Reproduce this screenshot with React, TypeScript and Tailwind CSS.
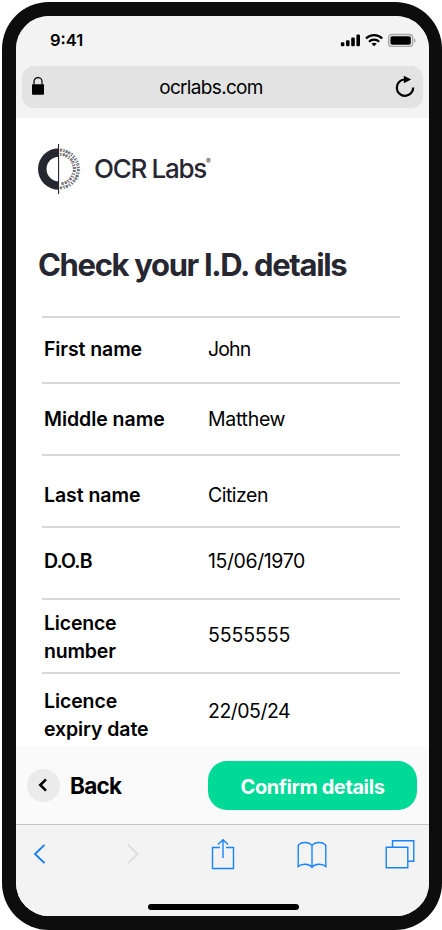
interface Detail {
  label: string;
  value: string;
  row: string;
  labelClass: string;
  valueClass: string;
}

const details: Detail[] = [
  {
    label: 'First name',
    value: 'John',
    row: 'h-[66px]',
    labelClass: 'pt-[17px] tracking-[-0.1px]',
    valueClass: 'pt-[17px] tracking-[-0.9px]',
  },
  {
    label: 'Middle name',
    value: 'Matthew',
    row: 'h-[72px]',
    labelClass: 'pt-[21px] tracking-[-0.05px]',
    valueClass: 'pt-[21px] tracking-[-0.3px]',
  },
  {
    label: 'Last name',
    value: 'Citizen',
    row: 'h-[72px]',
    labelClass: 'pt-[25px] tracking-[-0.05px]',
    valueClass: 'pt-[25px] tracking-[-0.5px]',
  },
  {
    label: 'D.O.B',
    value: '15/06/1970',
    row: 'h-[72px]',
    labelClass: 'pt-[19px] tracking-[-0.8px]',
    valueClass: 'pt-[19px] tracking-[-0.4px]',
  },
  {
    label: 'Licence number',
    value: '5555555',
    row: 'h-[74px]',
    labelClass: 'pt-[9px] tracking-[-0.2px]',
    valueClass: 'pt-[21px] tracking-[-0.1px]',
  },
  {
    label: 'Licence expiry date',
    value: '22/05/24',
    row: 'h-[74px]',
    labelClass: 'pt-[13px] tracking-[-0.1px]',
    valueClass: 'pt-[23px] tracking-[-0.5px]',
  },
];

function StatusIcons() {
  return (
    <svg width="76" height="16" viewBox="0 0 76 16" fill="#000">
      <rect x="0.8" y="9.2" width="3.6" height="4" rx="1.2" />
      <rect x="6" y="7.2" width="3.6" height="6" rx="1.2" />
      <rect x="11.2" y="4.6" width="3.6" height="8.6" rx="1.2" />
      <rect x="16.4" y="1.6" width="3.6" height="11.6" rx="1.2" />
      <g fill="none" stroke="#000" strokeWidth="2.2">
        <path d="M26 5.500a11.600 11.600 0 0 1 16.200 0" />
        <path d="M29 8.700a7.300 7.300 0 0 1 10.200 0" />
      </g>
      <path d="M31.500 10.700a4.200 4.200 0 0 1 5.200 0l-2.600 2.600z" />
      <rect x="48.6" y="1.5" width="24" height="11.9" rx="3.2" fill="none" stroke="#a6a6a6" strokeWidth="1.4" />
      <rect x="50.4" y="3.2" width="20.4" height="8.5" rx="1.8" />
      <path d="M74 5.500v4c1-.3 1.500-1.100 1.500-2s-.5-1.700-1.500-2z" fill="#a6a6a6" />
    </svg>
  );
}

function AddressBar() {
  return (
    <div className="mx-[6px] flex h-[42px] items-center rounded-[12px] bg-[#e3e3e3]">
      <svg className="mb-[3px] ml-[9px]" width="14" height="20" viewBox="0 0 14 20">
        <path d="M3 9V5.6a4 4 0 0 1 8 0V9" fill="none" stroke="#000" strokeWidth="1.2" />
        <rect x="1" y="8.3" width="12" height="10.4" rx="1" />
      </svg>
      <span className="mt-[2px] mr-[17px] flex-1 text-center text-[19px] leading-[24px] tracking-[-0.67px]">
        ocrlabs.com
      </span>
      <svg className="mr-[7px]" width="22" height="24" viewBox="0 0 22 24">
        <path d="M11.400 4.500h-.7a8.200 8.200 0 1 0 8.500 8" fill="none" stroke="#000" strokeWidth="2.2" />
        <path d="M9.800.8v7.400l7.400-3.600z" />
      </svg>
    </div>
  );
}

function Logo() {
  return (
    <div className="flex h-[50px] items-center text-[#272731]">
      <svg width="46" height="50" viewBox="0 0 46 50">
        <path d="M20.8 4.200a20.800 20.800 0 0 0 0 41.600v-8.500a12.300 12.300 0 0 1 0-24.600z" fill="currentColor" />
        <rect x="20" y="0" width="1.1" height="50" fill="currentColor" />
        <defs>
          {/* outer arc first, then the inner one: the digits run on from one to the other */}
          <path id="ring" d="M21.500 7.600a17.400 17.400 0 0 1 0 34.800M21.500 11.600a13.400 13.400 0 0 1 0 26.800" />
        </defs>
        <text fontFamily="Liberation Mono, monospace" fontSize="4.5" fontWeight="700" fill="currentColor">
          <textPath href="#ring">01001111010100011010100100100110100</textPath>
        </text>
      </svg>
      <span className="ml-[10px] text-[26px] leading-[32px] font-[450] tracking-[-1.3px]">OCR Labs</span>
      <span className="mb-[15px] text-[7px] leading-none">®</span>
    </div>
  );
}

function DetailRow({ detail }: { detail: Detail }) {
  return (
    <div className={`flex border-t-2 border-[#d8d8d8] pl-[2px] text-[19.5px] leading-[28px] ${detail.row}`}>
      <div className={`w-[128px] font-semibold ${detail.labelClass}`}>{detail.label}</div>
      <div className={`ml-[36px] font-normal ${detail.valueClass}`}>{detail.value}</div>
    </div>
  );
}

function Toolbar() {
  return (
    <nav className="h-[92px] border-t border-[#c5c5c5] bg-[#f3f3f3]">
      <div className="flex h-[58px] items-center pl-[17px]">
        <svg width="14" height="22" viewBox="0 0 14 22" fill="none" stroke="#0a7aff" strokeWidth="1.8">
          <path d="M11.5 1.8 2 11l9.5 9.2" />
        </svg>
        <svg className="ml-[79px]" width="14" height="22" viewBox="0 0 14 22" fill="none" stroke="#dcdcdc" strokeWidth="1.8">
          <path d="M2 1.800 11.500 11 2 20.200" />
        </svg>
        <svg className="ml-[71px]" width="24" height="32" viewBox="0 0 24 32" fill="none" stroke="#1684ff" strokeWidth="1.4">
          <path d="M9 9.500H1.500v21h21v-21H15M12 20V2M7 6.500 12 1.700l5 4.800" />
        </svg>
        <svg className="mt-[2px] ml-[62px]" width="30" height="28" viewBox="0 0 30 28" fill="none" stroke="#1684ff" strokeWidth="1.4">
          <path d="M15 4.500v22M15 4.500C12 .4 4 .4 1.200 4.500v21c3.300-3.200 11-3.200 13.800.8 2.800-4 10.500-4 13.800-.8v-21C26 .4 18 .4 15 4.500z" />
        </svg>
        <svg className="ml-[58px]" width="30" height="30" viewBox="0 0 30 30" fill="none" stroke="#1684ff" strokeWidth="1.4">
          <path d="M1.200 8.200h21.600v20.600H1.200zM7.500 8V1.700h21.300v20.600H23" />
        </svg>
      </div>
      <div className="ml-[132px] mt-[21px] h-[6px] w-[151px] rounded-full bg-black" />
    </nav>
  );
}

export default function App() {
  return (
    <div className="flex h-[930px] w-[442px] bg-white pt-[2px] pl-[2px] font-['Inter',sans-serif] text-black">
      <div className="flex h-[928px] w-[440px] flex-col rounded-[47px] bg-[#0d0d0d] p-[14px] pr-[13px] pb-[14px]">
        <div className="flex flex-1 flex-col overflow-hidden rounded-[33px] bg-white">
          <header className="h-[102px] bg-[#f3f3f3]">
            <div className="flex h-[50px] items-center justify-between pr-[13px] pl-[34px]">
              <span className="mb-[2px] text-[16.5px] font-semibold">9:41</span>
              <StatusIcons />
            </div>
            <AddressBar />
          </header>
          <main className="h-[628px] pt-[26px] pr-[29px] pl-[22px]">
            <Logo />
            <h1 className="mt-[51px] text-[31px] leading-[40px] font-bold tracking-[-1.34px] text-[#272731]">
              Check your I.D. details
            </h1>
            <div className="mt-[31px] ml-[4px]">
              {details.map((detail) => (
                <DetailRow key={detail.label} detail={detail} />
              ))}
            </div>
          </main>
          <div className="flex h-[78px] items-center bg-[#fafafa] pr-[12px] pl-[11px]">
            <button className="flex items-center">
              <span className="flex size-[33px] items-center justify-center rounded-full bg-[#ebebeb]">
                <svg className="mr-[1px]" width="10" height="14" viewBox="0 0 10 14" fill="none" stroke="#000" strokeWidth="2.6">
                  <path d="M8 1.300 2.300 7 8 12.700" />
                </svg>
              </span>
              <span className="mt-[2px] ml-[10px] text-[22.5px] font-bold tracking-[-0.7px]">Back</span>
            </button>
            <button className="ml-auto h-[49px] w-[209px] rounded-[19px] bg-[#00da97] pt-[4px] text-[20px] font-bold tracking-[-0.4px] text-white">
              Confirm details
            </button>
          </div>
          <Toolbar />
        </div>
      </div>
    </div>
  );
}
